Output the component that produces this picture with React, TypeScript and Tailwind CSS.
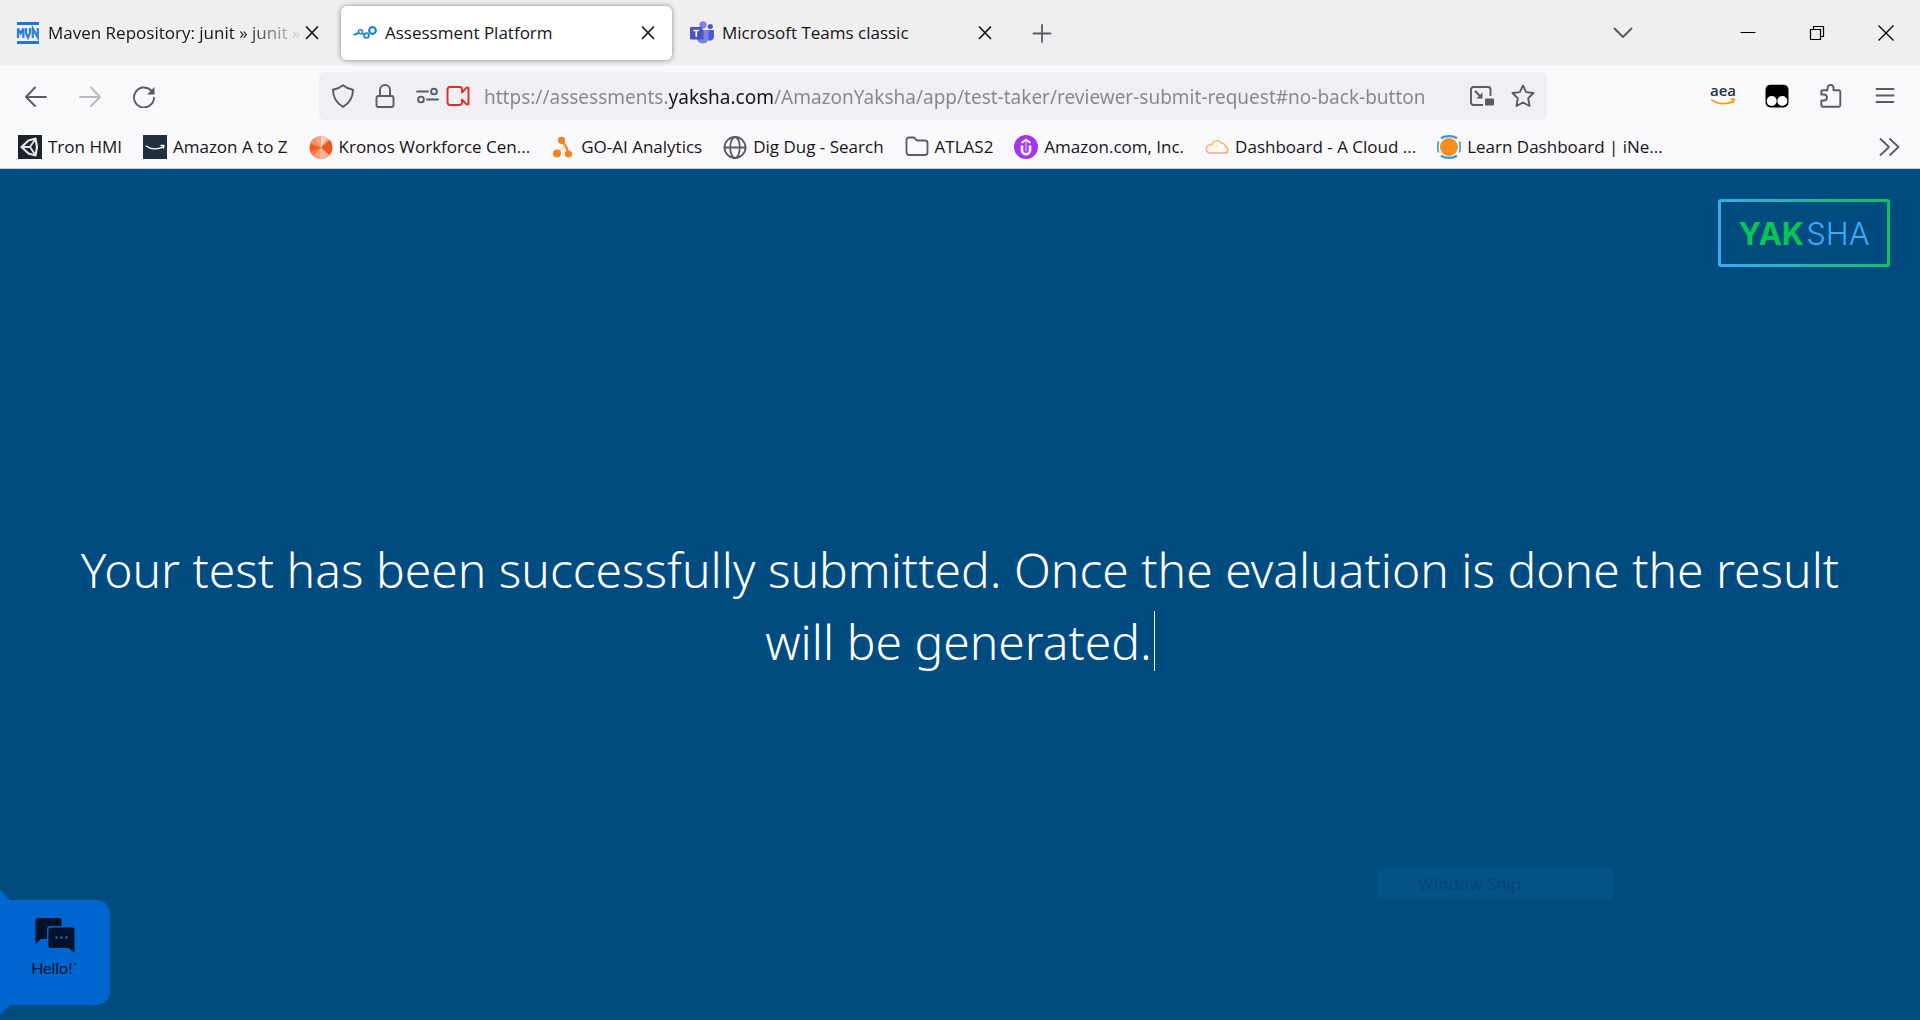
import type { ReactNode } from "react";

const MESSAGE =
  "Your test has been successfully submitted. Once the evaluation is done the result will be generated.";

function Icon({ children, className = "size-6", label }: { children: ReactNode; className?: string; label?: string }) {
  return (
    <svg viewBox="0 0 24 24" fill="none" stroke="currentColor" strokeWidth="2" strokeLinecap="round" strokeLinejoin="round" className={`shrink-0 ${className}`} aria-label={label} aria-hidden={label ? undefined : true}>
      {children}
    </svg>
  );
}

/* ---------- favicons ---------- */

const MvnIcon = () => (
  <Icon>
    <path d="M1 2.500h22M1 21.500h22" stroke="#1f78d8" strokeWidth="3" strokeLinecap="butt" />
    <path d="M2 17V7.500l2.700 5L7.400 7.500V17M10 7v5l2 4.500 2-4.500V7M16.800 17V7.500l5 9V7" stroke="#2a80dc" strokeWidth="2.200" strokeLinecap="butt" strokeLinejoin="miter" />
  </Icon>
);

const NodesIcon = () => (
  <Icon>
    <g stroke="#1a86c8">
      <circle cx="19.500" cy="9.500" r="3.300" strokeWidth="2.200" />
      <circle cx="13.500" cy="14.500" r="2.400" strokeWidth="1.800" />
      <circle cx="7.500" cy="10.800" r="2" strokeWidth="1.500" />
      <path d="M0.800 13.800l1.800-.8 3-1.200M9 12.500l2 1" strokeWidth="1.500" />
      <circle cx="3" cy="13.200" r=".8" fill="#1a86c8" strokeWidth="1" />
    </g>
  </Icon>
);

const TeamsIcon = () => (
  <Icon>
    <g stroke="none">
      <circle cx="20.300" cy="5.500" r="2.600" fill="#5059c9" />
      <circle cx="13" cy="3.800" r="3.600" fill="#7b83eb" />
      <path d="M16 9h7.200c.5 0 .8.400.8.800v5.700a4 4 0 0 1-6.500 3.200z" fill="#5059c9" />
      <path d="M7 9h11.500v8.500a5.800 5.800 0 0 1-11.500 0z" fill="#7b83eb" />
      <path d="M7 9h7v9.500H7z" fill="#464cb0" opacity=".55" />
      <rect x="0" y="6" width="12.500" height="12.500" rx="1" fill="#4b53bc" />
    </g>
    <path d="M3.500 9.500h5.600M6.300 9.500v6.300" stroke="#fff" strokeWidth="1.600" strokeLinecap="butt" />
  </Icon>
);

/* ---------- bookmark icons ---------- */

const UnityIcon = () => (
  <Icon>
    <rect width="24" height="24" fill="#1b222c" stroke="none" />
    <path d="M17.500 3.500L10.500 5.500 3.500 12l7 6.500 7 2 1.500-8.500z" stroke="#e4e6e8" strokeWidth="2.200" />
    <path d="M5 12h7M12 12l5-7.500M12 12l5 7.500" stroke="#e4e6e8" strokeWidth="1.800" />
  </Icon>
);

const AtoZIcon = () => (
  <Icon>
    <rect width="24" height="24" fill="#232f3e" stroke="none" />
    <path d="M3.200 11c4.500 3.600 11.500 3.800 16.500 1.200M18 10.500l3-.2-.7 2.700" stroke="#fff" strokeWidth="1.300" />
  </Icon>
);

const KronosIcon = () => (
  <Icon>
    <g stroke="none">
      <ellipse cx="12" cy="12.500" rx="11.500" ry="11.500" fill="#f6a58a" />
      <path d="M12 12.500L.7 10.500A11.500 11.500 0 0 0 4.500 21.200z" fill="#f47a48" />
      <path d="M12 12.500L.7 10.500A11.500 11.500 0 0 1 6 2.700z" fill="#f59067" />
      <path d="M12 12.500L10 23.800a11.500 11.500 0 0 0 8-1.200z" fill="#f8b49c" />
      <path d="M12 12.500L1.500 8.500a11.500 11.500 0 0 0 0 8z" fill="#f15f26" />
      <path d="M12 12.500L20.500 4.700a11.500 11.500 0 0 1 0 15.600z" fill="#ee5a24" />
      <path d="M12 12.500L12 1a11.500 11.500 0 0 1 6 1.700z" fill="#fbd0bb" />
      <path d="M12 12.500L4.500 21.200A11.500 11.500 0 0 0 10 23.800z" fill="#f79a78" />
    </g>
  </Icon>
);

const GoAiIcon = () => (
  <Icon>
    <path d="M10.500 5.300L15 11.500l2.500 7.500" stroke="#f58a2e" strokeWidth="2.400" />
    <path d="M13.500 11l-7 7" stroke="#fbd0a8" strokeWidth="1.300" />
    <g fill="#f5821f" stroke="none">
      <circle cx="10.500" cy="5.300" r="3.600" />
      <circle cx="6" cy="18.500" r="4" />
      <circle cx="17.500" cy="19" r="3.600" />
    </g>
  </Icon>
);

const GlobeIcon = () => (
  <Icon className="size-6 text-[#5b5b66]">
    <g strokeWidth="1.800">
      <circle cx="12" cy="12.500" r="10.500" />
      <ellipse cx="12" cy="12.500" rx="4.800" ry="10.500" />
      <path d="M1.500 12.500h21" />
    </g>
  </Icon>
);

const FolderIcon = () => (
  <Icon className="size-6 text-[#5b5b66]">
    <path d="M1.500 17.500V5a2.500 2.500 0 0 1 2.500-2.500h4c1 0 1.700.4 2.300 1.100l.9 1.100c.3.500.8.800 1.500.8H20A2.500 2.500 0 0 1 22.500 8v9.500A2.500 2.500 0 0 1 20 20H4a2.500 2.500 0 0 1-2.500-2.500z" strokeWidth="1.800" />
  </Icon>
);

const UIcon = () => (
  <Icon>
    <circle cx="12" cy="12" r="12" fill="#a435f0" stroke="none" />
    <path d="M8 10.500v4.800a4 4 0 0 0 8 0v-4.800" stroke="#fff" strokeWidth="2.600" strokeLinecap="butt" />
    <path d="M7.500 7.800L12 5l4.500 2.800" stroke="#fff" strokeWidth="2" strokeLinecap="butt" strokeLinejoin="miter" />
    <path d="M12 7v9" stroke="#e3c2fb" strokeWidth="1.200" />
  </Icon>
);

const CloudIcon = () => (
  <Icon>
    <defs>
      <linearGradient id="cloud" x1="0" y1="0" x2="0" y2="1">
        <stop offset="0" stopColor="#fbc77a" />
        <stop offset="1" stopColor="#fba095" />
      </linearGradient>
    </defs>
    <path d="M4.500 18h15.300a3.200 3.200 0 0 0 .5-6.300 3.500 3.500 0 0 0-3.800-3.500A5.300 5.300 0 0 0 6.800 9.800 4.200 4.200 0 0 0 4.500 18z" fill="#fffaf3" stroke="url(#cloud)" strokeWidth="1.700" />
    <path d="M9 12.500a3 3 0 0 1 5-1" stroke="#fde3c4" strokeWidth="1" />
  </Icon>
);

const LearnIcon = () => (
  <Icon>
    <circle cx="12" cy="12" r="9" fill="#f78d1e" stroke="none" />
    <path d="M4 3.200C8.500.4 15.500.4 20 3.200M4 20.800c4.500 2.800 11.500 2.800 16 0" stroke="#3598d6" strokeWidth="2.200" strokeLinecap="butt" />
    <path d="M1.600 6.500c-1 3.500-1 7.500 0 11M22.400 6.500c1 3.500 1 7.500 0 11" stroke="#3598d6" strokeWidth="1.600" strokeLinecap="butt" />
  </Icon>
);

const bookmarks: { label: string; icon: ReactNode }[] = [
  { label: "Tron HMI", icon: <UnityIcon /> },
  { label: "Amazon A to Z", icon: <AtoZIcon /> },
  { label: "Kronos Workforce Cen...", icon: <KronosIcon /> },
  { label: "GO-AI Analytics", icon: <GoAiIcon /> },
  { label: "Dig Dug - Search", icon: <GlobeIcon /> },
  { label: "ATLAS2", icon: <FolderIcon /> },
  { label: "Amazon.com, Inc.", icon: <UIcon /> },
  { label: "Dashboard - A Cloud ...", icon: <CloudIcon /> },
  { label: "Learn Dashboard | iNe...", icon: <LearnIcon /> },
];

const tabs: { label: string; icon: ReactNode; active?: boolean; faded?: boolean }[] = [
  { label: "Maven Repository: junit » junit »", icon: <MvnIcon />, faded: true },
  { label: "Assessment Platform", icon: <NodesIcon />, active: true },
  { label: "Microsoft Teams classic", icon: <TeamsIcon /> },
];

function IconButton({ label, className, children }: { label: string; className: string; children: ReactNode }) {
  return (
    <button type="button" aria-label={label} className={`flex shrink-0 items-center justify-center ${className}`}>
      {children}
    </button>
  );
}

function TabStrip() {
  return (
    <div className="flex h-[66px] items-center bg-[#efefef] pl-px">
      {tabs.map((t) => (
        <div key={t.label} className="w-[337px] shrink-0 px-[3px]">
          <div className={`flex h-[54px] items-center rounded-md pl-3 pr-3 ${t.active ? "bg-white shadow-[0_0_5px_rgba(0,0,0,0.45)]" : ""}`}>
            <button type="button" className="flex flex-1 items-center gap-2 text-[#15141a]">
              {t.icon}
              <span className={`whitespace-nowrap ${t.faded ? "[mask-image:linear-gradient(to_right,#000_78%,transparent_102%)]" : ""}`}>{t.label}</span>
            </button>
            <IconButton label={`Close ${t.label}`} className="size-6 text-[#15141a]">
              <Icon><path d="M6.500 6l11 11.500M17.500 6l-11 11.500" strokeWidth="1.700" /></Icon>
            </IconButton>
          </div>
        </div>
      ))}
      <IconButton label="New tab" className="ml-1.5 size-12 text-[#5b5b66]">
        <Icon><path d="M12 4v17M3.500 12.500h17" strokeWidth="1.800" /></Icon>
      </IconButton>
      <div className="flex-1" />
      <IconButton label="List all tabs" className="mr-[66px] size-12 text-[#5b5b66]">
        <Icon><path d="M3.500 7.500l8.500 8.500 8.500-8.500" /></Icon>
      </IconButton>
      <IconButton label="Minimize" className="h-full w-[69px] text-black">
        <Icon><path d="M4.500 11.500h15" strokeWidth="1" strokeLinecap="butt" /></Icon>
      </IconButton>
      <IconButton label="Restore" className="h-full w-[69px] text-black">
        <Icon><path d="M5.500 8.500h10v10h-10zM8.500 8.500v-3h10v10h-3" strokeWidth="1.200" strokeLinejoin="miter" /></Icon>
      </IconButton>
      <IconButton label="Close window" className="h-full w-[69px] text-black">
        <Icon><path d="M4.500 4.500l15 15M19.500 4.500l-15 15" strokeWidth="1.300" strokeLinecap="butt" /></Icon>
      </IconButton>
    </div>
  );
}

function Toolbar() {
  return (
    <div className="flex items-center bg-[#f9f9fb] pb-0.5 pt-1.5 text-[#5b5b66]">
      <div className="flex w-[319px] shrink-0 pl-[9px]">
        <IconButton label="Back" className="h-12 w-[54px]">
          <Icon><path d="M22 13H2.500M11 3.500L2 13l9 9" strokeWidth="1.900" /></Icon>
        </IconButton>
        <IconButton label="Forward" className="h-12 w-[54px] text-[#b9b9be]">
          <Icon><path d="M2 13h19.500M13 3.500l9 9.500-9 9" strokeWidth="1.900" /></Icon>
        </IconButton>
        <IconButton label="Reload" className="h-12 w-[54px]">
          <Icon>
            <path d="M19 6.300A10 10 0 1 0 22 13.800" strokeWidth="1.900" />
            <path d="M22.500 3v7.500H15z" fill="currentColor" stroke="none" />
          </Icon>
        </IconButton>
      </div>
      <div className="flex h-12 min-w-0 flex-1 items-center rounded-md bg-[#f0f0f4]">
        <IconButton label="Tracking protection" className="h-12 w-12">
          <Icon><path d="M12 1.200c3.200 2.700 6 3.800 10 4.600 0 7.700-3.200 13.200-10 17-6.800-3.800-10-9.300-10-17 4-.8 6.800-1.900 10-4.600z" strokeWidth="1.900" /></Icon>
        </IconButton>
        <IconButton label="Site information" className="h-12 w-9">
          <Icon>
            <rect x="3.500" y="12" width="17" height="11" rx="2" strokeWidth="1.900" />
            <path d="M7 11.500V6a5 5 0 0 1 10 0v5.500" strokeWidth="1.900" />
          </Icon>
        </IconButton>
        <IconButton label="Permissions" className="ml-3 h-12 w-6">
          <Icon>
            <g strokeWidth="1.900">
              <path d="M2 7.500h11M12 15.500h11" />
              <circle cx="19" cy="7.500" r="2.900" />
              <circle cx="6" cy="15.500" r="2.900" />
            </g>
          </Icon>
        </IconButton>
        <IconButton label="Camera in use" className="ml-[7px] h-12 w-6 text-[#e22c22]">
          <Icon><path d="M4 3h9.500a2.500 2.500 0 0 1 2.500 2.500v3l4.500-4.800h2v16.600h-2L16 15.500v3a2.500 2.500 0 0 1-2.500 2.500H4a2.500 2.500 0 0 1-2.500-2.500v-13A2.500 2.500 0 0 1 4 3z" strokeWidth="1.900" /></Icon>
        </IconButton>
        <input
          aria-label="Address"
          readOnly
          defaultValue="https://assessments.yaksha.com/AmazonYaksha/app/test-taker/reviewer-submit-request#no-back-button"
          className="ml-3.5 h-12 min-w-0 flex-1 bg-[linear-gradient(90deg,#86868b_185px,#15141a_185px_289px,#86868b_289px)] bg-clip-text pt-0.5 font-['Noto_Sans',sans-serif] text-[19px] text-transparent outline-none"
        />
        <IconButton label="Picture in picture" className="h-12 w-10">
          <Icon>
            <path d="M13 21H3.500a2.500 2.500 0 0 1-2.500-2.500v-13A2.500 2.500 0 0 1 3.500 3H18a2.500 2.500 0 0 1 2.500 2.500V12" strokeWidth="1.900" strokeLinecap="butt" />
            <path d="M5.500 7.500l5 5" strokeWidth="1.900" />
            <path d="M12.500 8.500v6h-6z" fill="currentColor" stroke="none" />
            <rect x="15" y="14.500" width="9" height="7" rx="1.200" fill="currentColor" stroke="none" />
          </Icon>
        </IconButton>
        <IconButton label="Bookmark this page" className="mr-[3px] h-12 w-[42px]">
          <Icon><path d="M12 1.500l3.100 6.600 7.400.9-5.300 5.200 1.300 7.800L12 18.500 5.500 22l1.300-7.800L1.500 9l7.400-.9z" strokeWidth="1.900" /></Icon>
        </IconButton>
      </div>
      <div className="flex w-[373px] shrink-0 justify-end pr-2">
        <IconButton label="aea" className="h-12 w-[54px] flex-col pb-1">
          <span className="text-[15px] leading-3 font-semibold text-[#232f3e]">aea</span>
          <svg viewBox="0 0 24 7" className="mt-0.5 h-[7px] w-6" fill="none" stroke="#ff9900" strokeWidth="1.600" strokeLinecap="round" aria-hidden="true">
            <path d="M.8 1.800c6 4.800 15 5 21.300 1.400M20 1.300l3.200-.1-.8 3.300" />
          </svg>
        </IconButton>
        <IconButton label="Tampermonkey" className="h-12 w-[54px]">
          <Icon>
            <rect x=".5" y=".8" width="23" height="22.700" rx="5" fill="#000" stroke="none" />
            <circle cx="6.700" cy="17" r="5" fill="#fff" stroke="none" />
            <circle cx="17.300" cy="17" r="5" fill="#fff" stroke="none" />
          </Icon>
        </IconButton>
        <IconButton label="Extensions" className="h-12 w-[54px]">
          <Icon><path d="M4 22.800A1.800 1.800 0 0 1 2.300 21v-4.500h2.600a3 3 0 0 0 0-6H2.300V8A1.800 1.800 0 0 1 4 6.200h4.500V4a3 3 0 0 1 6 0v2.200H19.500A1.800 1.800 0 0 1 21.300 8v13a1.800 1.800 0 0 1-1.800 1.800z" strokeWidth="1.900" /></Icon>
        </IconButton>
        <IconButton label="Open application menu" className="h-12 w-[54px]">
          <Icon><path d="M3.500 5h17M3.500 11.500h17M3.500 18h17" strokeWidth="1.900" /></Icon>
        </IconButton>
      </div>
    </div>
  );
}

function BookmarksBar() {
  return (
    <nav aria-label="Bookmarks" className="flex h-[47px] items-center gap-[21px] border-b border-[#cfcfd4] bg-[#f9f9fb] pl-[18px] pr-[19px] pt-1">
      {bookmarks.map((b) => (
        <a key={b.label} href="#" className="flex shrink-0 items-center gap-1.5 whitespace-nowrap text-[#15141a]">
          {b.icon}
          {b.label}
        </a>
      ))}
      <IconButton label="Show more bookmarks" className="ml-auto size-6 text-[#5b5b66]">
        <Icon><path d="M3 3.500l9 8.500-9 8.500M12.500 3.500l9 8.500-9 8.500" strokeWidth="1.800" strokeLinecap="butt" /></Icon>
      </IconButton>
    </nav>
  );
}

function YakshaLogo() {
  return (
    <div className="rounded-[3px] bg-linear-[75deg,#3fa9f5,#06c755] p-[3px]">
      <div className="flex h-[62px] w-[166px] items-center justify-center gap-0.5 rounded-[1px] bg-[#004c80] font-['Inter',sans-serif] text-[31px] leading-none">
        <span className="font-bold text-[#06c755]">YAK</span>
        <span className="font-light text-[#3fa9f5]">SHA</span>
      </div>
    </div>
  );
}

function ChatButton() {
  return (
    <button type="button" className="absolute bottom-[5px] left-0 flex h-[125px] w-[110px] flex-col py-2.5">
      <svg viewBox="0 0 10 125" className="absolute left-0 top-0 h-[125px] w-2.5" aria-hidden="true">
        <path d="M0 0l10 10v105l-10 10z" fill="#0066cf" />
      </svg>
      <span className="flex w-full flex-1 flex-col items-center rounded-r-[14px] bg-[#0066cf] pt-[18px] text-[#001228]">
        <svg viewBox="0 0 40 36" className="h-9 w-10" aria-hidden="true">
          <path d="M3 0h21a2.500 2.500 0 0 1 2.500 2.500V8H15a3 3 0 0 0-3 3v10H6l-5.500 5V2.500A2.500 2.500 0 0 1 3 0z" fill="currentColor" />
          <path d="M16 9.500h21.500a2 2 0 0 1 2 2V35l-5.500-5H16a2.500 2.500 0 0 1-2.500-2.500V12A2.500 2.500 0 0 1 16 9.500z" fill="currentColor" />
          <path d="M20.500 18.500h2v2h-2zM25.500 18.500h2v2h-2zM30.500 18.500h2v2h-2z" fill="#2a80dc" />
        </svg>
        <span className="mt-0.5 font-['Lato',sans-serif] text-base leading-6">Hello!`</span>
      </span>
    </button>
  );
}

export default function App() {
  return (
    <div className="flex min-h-screen flex-col font-['Open_Sans','Noto_Sans',sans-serif] text-[17px]">
      <TabStrip />
      <Toolbar />
      <BookmarksBar />
      <main className="relative flex flex-1 flex-col bg-[#004c80]">
        <header className="flex justify-end p-[30px]">
          <YakshaLogo />
        </header>
        <div className="flex flex-1 items-center justify-center px-16 pb-[106px]">
          <h1 className="text-center font-['Noto_Sans',sans-serif] text-5xl leading-[72px] font-light text-white">
            {MESSAGE}
            <span className="ml-0.5 inline-block h-[60px] w-px bg-white align-[-11px]" />
          </h1>
        </div>
        <div className="absolute bottom-[121px] right-[307px] flex h-[31px] w-[236px] items-center bg-[#065284] pl-[41px] text-[#00457a]">
          Window Snip
        </div>
        <ChatButton />
      </main>
    </div>
  );
}
